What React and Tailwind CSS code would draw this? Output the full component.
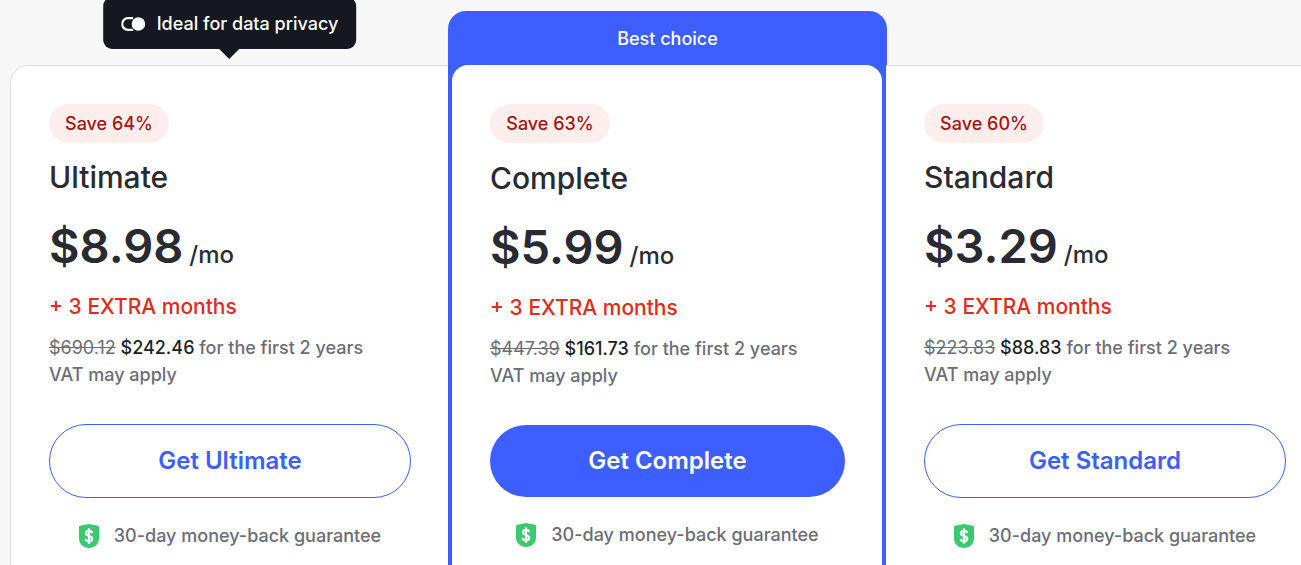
const plans = [
  {
    name: "Ultimate",
    save: "Save 64%",
    price: "$8.98",
    before: "$690.12",
    now: "$242.46",
    tip: "Ideal for data privacy",
  },
  {
    name: "Complete",
    save: "Save 63%",
    price: "$5.99",
    before: "$447.39",
    now: "$161.73",
    best: true,
  },
  {
    name: "Standard",
    save: "Save 60%",
    price: "$3.29",
    before: "$223.83",
    now: "$88.83",
    last: true,
  },
];

function ToggleIcon() {
  return (
    <svg viewBox="0 0 24 14" className="h-[14px] w-6 shrink-0" aria-hidden="true">
      <path
        d="M12 1.2H6.8a5.8 5.8 0 0 0 0 11.6H12"
        fill="none"
        stroke="#fff"
        strokeWidth="2.2"
      />
      <circle cx="17.2" cy="7" r="7.6" fill="#151721" />
      <circle cx="17.2" cy="7" r="6.8" fill="#fff" />
    </svg>
  );
}

function ShieldIcon() {
  return (
    <svg viewBox="0 0 20 24" className="h-6 w-5 shrink-0" aria-hidden="true">
      <path
        d="M10 0 19 1.8Q20 2 20 3V14.5C20 20 15.5 24 10 24S0 20 0 14.5V3Q0 2 1 1.8Z"
        fill="#3bc96f"
      />
      <path
        d="M13.1 9.1C12.9 7.6 11.7 6.8 10 6.8 8.2 6.8 6.9 7.8 6.9 9.3 6.9 12.9 13.2 11 13.2 14.8 13.2 16.3 11.9 17.3 10 17.3 8.1 17.3 6.9 16.4 6.7 14.8M10 4.2V19.8"
        fill="none"
        stroke="#fff"
        strokeWidth="2.2"
      />
    </svg>
  );
}

function Tip({ children }) {
  return (
    <div className="absolute bottom-full left-1/2 mb-[17px] flex -translate-x-1/2 items-center gap-3 rounded-[9px] bg-[#151721] px-[18px] pt-[13px] pb-[11px] text-lg font-medium whitespace-nowrap text-white">
      <ToggleIcon />
      {children}
      <svg
        viewBox="0 0 20 10"
        className="absolute top-full left-1/2 h-[10px] w-5 -translate-x-1/2"
        aria-hidden="true"
      >
        <path d="M0 0h20L10 10Z" fill="#151721" />
      </svg>
    </div>
  );
}

function PlanBody({ plan }) {
  return (
    <>
      <span className="flex w-[120px] justify-center self-start rounded-full bg-[#fdeeee] py-[6px] text-lg leading-[27px] font-medium text-[#a4150f]">
        {plan.save}
      </span>
      <h2
        className={
          plan.best
            ? "mt-4 text-[30px] leading-[38px] font-medium"
            : "mt-[15px] text-[30px] leading-[38px] font-medium"
        }
      >
        {plan.name}
      </h2>
      <p className="mt-5 flex items-baseline gap-[6px]">
        <span className="text-[47px] leading-[60px] font-semibold">{plan.price}</span>
        <span className="text-2xl font-medium">/mo</span>
      </p>
      <p className="mt-4 text-[21px] leading-[30px] font-medium text-[#e02b20]">
        + 3 EXTRA months
      </p>
      <p className="mt-3 text-lg leading-[27px] font-medium text-[#6c6d75]">
        <s className="font-normal">{plan.before}</s>{" "}
        <span className="text-[#1d1f27]">{plan.now}</span> for the first 2 years
        <br />
        VAT may apply
      </p>
      <button
        type="button"
        className={
          plan.best
            ? "mt-9 h-[72px] rounded-full bg-[#3e5fff] text-2xl font-semibold text-white"
            : "mt-9 h-[74px] rounded-full border border-[#3e5fff] bg-white text-2xl font-semibold text-[#3e5fff]"
        }
      >
        Get {plan.name}
      </button>
      <p className="mt-6 flex items-center justify-center gap-[15px] text-lg leading-[27px] font-medium text-[#6c6d75]">
        <ShieldIcon />
        30-day money-back guarantee
      </p>
    </>
  );
}

function PlanCard({ plan }) {
  if (plan.best) {
    return (
      <section className="relative flex flex-col bg-white">
        <div className="absolute bottom-full left-0 flex h-[54px] w-[calc(100%+1px)] items-center justify-center rounded-t-[18px] bg-[#3e5fff] pt-0.5 text-lg font-medium text-white">
          Best choice
        </div>
        <div className="flex flex-1 flex-col bg-[#3e5fff] px-1">
          <div className="flex flex-1 flex-col rounded-t-2xl bg-white pt-[39px] pr-[37px] pl-[38px]">
            <PlanBody plan={plan} />
          </div>
        </div>
      </section>
    );
  }
  return (
    <section
      className={
        plan.last
          ? "relative flex flex-col border-t border-[#dedfe2] bg-white pt-[38px] pr-[15px] pl-[38px]"
          : "relative flex flex-col rounded-tl-[18px] border-t border-l border-[#dedfe2] bg-white pt-[38px] pr-[37px] pl-[38px]"
      }
    >
      {plan.tip && <Tip>{plan.tip}</Tip>}
      <PlanBody plan={plan} />
    </section>
  );
}

export default function App() {
  return (
    <main className="flex min-h-screen flex-col overflow-hidden bg-[#f7f7f7] pt-[65px] pl-[10px] font-['Inter',sans-serif] text-[#2a2b32]">
      <div className="grid flex-1 grid-cols-[438fr_438fr_415fr]">
        {plans.map((plan) => (
          <PlanCard key={plan.name} plan={plan} />
        ))}
      </div>
    </main>
  );
}
